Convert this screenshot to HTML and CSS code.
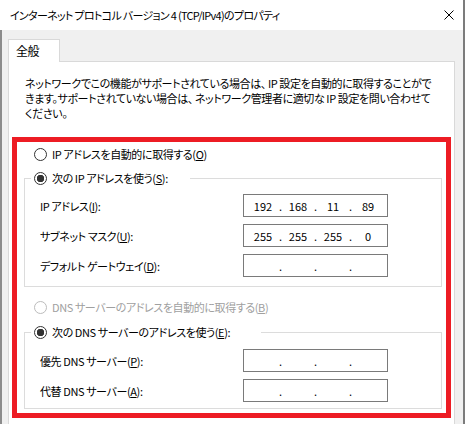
FILE: index.html
```html
<!DOCTYPE html>
<html lang="ja">
<head>
    <meta charset="UTF-8">
    <title>インターネット プロトコル バージョン 4 (TCP/IPv4)のプロパティ</title>
    <link rel="stylesheet" href="styles.css">
</head>
<body>
    <div class="window">
        <!-- タイトルバー -->
        <div class="titlebar">
            <span class="title">インターネット プロトコル バージョン 4 (TCP/IPv4)のプロパティ</span>
            <svg class="close" width="10" height="10" viewBox="0 0 10 10">
                <path d="M0.5 0.5L9.5 9.5M9.5 0.5L0.5 9.5" stroke="#000" stroke-width="1" fill="none"/>
            </svg>
        </div>

        <div class="client">
            <div class="tab">全般</div>
            <div class="panel">
                <p class="intro">ネットワークでこの機能がサポートされている場合は、 IP 設定を自動的に取得することがで<br>きます。サポートされていない場合は、 ネットワーク管理者に適切な IP 設定を問い合わせて<br>ください。</p>

                <div class="highlight">
                    <label class="radio"><input type="radio" name="ip"><span>IP アドレスを自動的に取得する(<u>O</u>)</span></label>

                    <fieldset class="group">
                        <legend class="legend-ip">
                            <label class="radio"><input type="radio" name="ip" checked><span>次の IP アドレスを使う(<u>S</u>):</span></label>
                        </legend>
                        <div class="rows">
                            <span>IP アドレス(<u>I</u>):</span>
                            <div class="ipbox"><span>192</span><i>.</i><span>168</span><i>.</i><span>11</span><i>.</i><span>89</span></div>
                            <span>サブネット マスク(<u>U</u>):</span>
                            <div class="ipbox"><span>255</span><i>.</i><span>255</span><i>.</i><span>255</span><i>.</i><span>0</span></div>
                            <span>デフォルト ゲートウェイ(<u>D</u>):</span>
                            <div class="ipbox"><span></span><i>.</i><span></span><i>.</i><span></span><i>.</i><span></span></div>
                        </div>
                    </fieldset>

                    <label class="radio off dns-auto"><input type="radio" name="dns" disabled><span>DNS サーバーのアドレスを自動的に取得する(<u>B</u>)</span></label>

                    <fieldset class="group group-dns">
                        <legend class="legend-dns">
                            <label class="radio"><input type="radio" name="dns" checked><span>次の DNS サーバーのアドレスを使う(<u>E</u>):</span></label>
                        </legend>
                        <div class="rows">
                            <span>優先 DNS サーバー(<u>P</u>):</span>
                            <div class="ipbox"><span></span><i>.</i><span></span><i>.</i><span></span><i>.</i><span></span></div>
                            <span>代替 DNS サーバー(<u>A</u>):</span>
                            <div class="ipbox"><span></span><i>.</i><span></span><i>.</i><span></span><i>.</i><span></span></div>
                        </div>
                    </fieldset>
                </div>
            </div>
        </div>
    </div>
</body>
</html>
```

FILE: styles.css
```css
* {
    box-sizing: border-box;
}
body {
    margin: 0;
    background: #f0f0f0;
    font-family: "Noto Sans CJK JP", sans-serif;
    font-size: 11px;
    letter-spacing: -0.4px;
    color: #000;
    font-feature-settings: "palt";
}
.window {
    width: 465px;
    height: 424px;
    border-right: 2px solid #7c7c7c;
    display: flex;
    flex-direction: column;
    overflow: hidden;
}
.titlebar {
    height: 30px;
    flex: none;
    background: #fff;
    display: flex;
    align-items: center;
    justify-content: space-between;
    padding: 0 9px 0 10px;
}
.title {
    letter-spacing: -0.7px;
}
.client {
    flex: 1;
    border-left: 2px solid #8c8c8c;
    padding: 9px 8px 0 6px;
}
.tab {
    width: 52px;
    height: 23px;
    background: #fff;
    border: 1px solid #d9d9d9;
    border-bottom: 0;
    padding: 3px 0 0 7px;
    line-height: 15px;
    font-size: 12px;
    position: relative;
    z-index: 1;
    margin-bottom: -1px;
}
.panel {
    background: #fff;
    border: 1px solid #d9d9d9;
    padding: 0 3px;
    height: 400px;
}
.intro {
    margin: 0;
    padding: 14px 13px 16px;
    line-height: 15px;
    white-space: nowrap;
}
/* 赤枠 */
.highlight {
    border: 5px solid #ed1c24;
    padding: 5px 4px 4px 7px;
}
.radio {
    display: flex;
    align-items: center;
    height: 15px;
    line-height: 15px;
    margin-left: 10px;
    white-space: nowrap;
}
.radio input {
    appearance: none;
    flex: none;
    width: 13px;
    height: 13px;
    margin: 0 5px 0 0;
    border: 1px solid #333;
    border-radius: 50%;
    background: #fff;
}
.radio input:checked {
    background: radial-gradient(circle, #333 0 3.5px, #fff 4px);
}
.radio input:disabled {
    border-color: #bcbcbc;
}
.radio.off {
    color: #a0a0a0;
}
.group {
    margin: 9px 0 0;
    border: 1px solid #dcdcdc;
    padding: 8px 0 9px 15px;
    min-width: 0;
}
.group legend {
    padding: 0 3px;
    margin-left: -9px;
}
.group legend .radio {
    margin-left: 0;
}
.legend-ip {
    width: 159px;
}
.legend-dns {
    width: 230px;
}
.dns-auto {
    margin-top: 13px;
}
.group-dns {
    margin-top: 10px;
    padding-top: 9px;
    padding-bottom: 6px;
}
.rows {
    display: grid;
    grid-template-columns: 203px 145px;
    grid-auto-rows: 23px;
    row-gap: 7px;
    align-items: center;
    white-space: nowrap;
}
.ipbox {
    height: 23px;
    border: 1px solid #7a7a7a;
    display: flex;
    align-items: center;
    padding-left: 5px;
    letter-spacing: 0;
}
.ipbox span {
    width: 28px;
    text-align: center;
}
.ipbox i {
    font-style: normal;
    width: 7px;
    text-align: center;
}
```
